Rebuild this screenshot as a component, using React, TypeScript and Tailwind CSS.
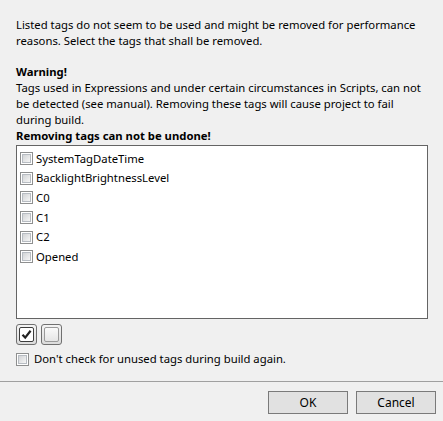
import React from "react";

function Check({ className = "" }: { className?: string }) {
  return (
    <span
      className={
        "flex h-[13px] w-[13px] shrink-0 items-center justify-center border border-[#8e8f8f] bg-white " +
        className
      }
    >
      <span className="h-[9px] w-[9px] border border-[#b7bcc2] bg-gradient-to-br from-[#d2d4d6] to-[#f6f6f6]" />
    </span>
  );
}

const tags = [
  "SystemTagDateTime",
  "BacklightBrightnessLevel",
  "C0",
  "C1",
  "C2",
  "Opened",
];

export default function App() {
  return (
    <div
      className="flex h-[421px] w-[443px] flex-col bg-[#f0f0f0] text-[11.3px] text-black"
      style={{ fontFamily: '"Noto Sans", "Open Sans", sans-serif' }}
    >
      <div className="flex flex-col px-4 pt-[17px]">
        <div className="whitespace-nowrap leading-[16px]">
          Listed tags do not seem to be used and might be removed for performance
          <br />
          reasons. Select the tags that shall be removed.
        </div>
        <div className="mt-[15px] whitespace-nowrap leading-[16px]">
          <div className="font-bold">Warning!</div>
          <div>
            Tags used in Expressions and under certain circumstances in Scripts, can not
            <br />
            be detected (see manual). Removing these tags will cause project to fail
            <br />
            during build.
          </div>
          <div className="font-bold">Removing tags can not be undone!</div>
        </div>
        <div className="mt-px flex h-[174px] w-[412px] flex-col border border-[#646464] bg-white pt-[3px]">
          {tags.map((t) => (
            <div key={t} className="flex h-[19.6px] items-center gap-[3px] pl-[3px]">
              <Check />
              <span className="leading-[16px]">{t}</span>
            </div>
          ))}
        </div>
        <div className="mt-[5px] flex gap-[4px]">
          <div className="flex h-[21px] w-[21px] items-center justify-center rounded-[3px] border border-[#707070] bg-gradient-to-b from-[#f4f4f4] to-[#dcdcdc]">
            <div className="flex h-[15px] w-[15px] items-center justify-center rounded-[2px] border border-[#3c3c3c] bg-white">
              <svg width="11" height="11" viewBox="0 0 11 11">
                <path d="M1.5 5.8 L4.2 8.6 L9.6 1.8" fill="none" stroke="#222" strokeWidth="2.2" />
              </svg>
            </div>
          </div>
          <div className="flex h-[21px] w-[21px] items-center justify-center rounded-[3px] border border-[#707070] bg-gradient-to-b from-[#f4f4f4] to-[#dcdcdc]">
            <div className="h-[15px] w-[15px] rounded-[2px] border border-[#9a9a9a] bg-gradient-to-b from-[#fafafa] to-[#e6e6e6]" />
          </div>
        </div>
        <div className="mt-[6px] flex items-center gap-[5px]">
          <Check />
          <span className="leading-[16px]">Don't check for unused tags during build again.</span>
        </div>
      </div>
      <div className="mt-auto h-[40px] border-t border-[#a0a0a0] pt-[9px]">
        <div className="flex justify-end gap-[8px] pr-[7px]">
          <button className="h-[23px] w-[80px] border border-[#7a7a7a] bg-[#e1e1e1] text-[12px] leading-[16px]">
            OK
          </button>
          <button className="h-[23px] w-[80px] border border-[#7a7a7a] bg-[#e1e1e1] text-[12px] leading-[16px]">
            Cancel
          </button>
        </div>
      </div>
    </div>
  );
}
